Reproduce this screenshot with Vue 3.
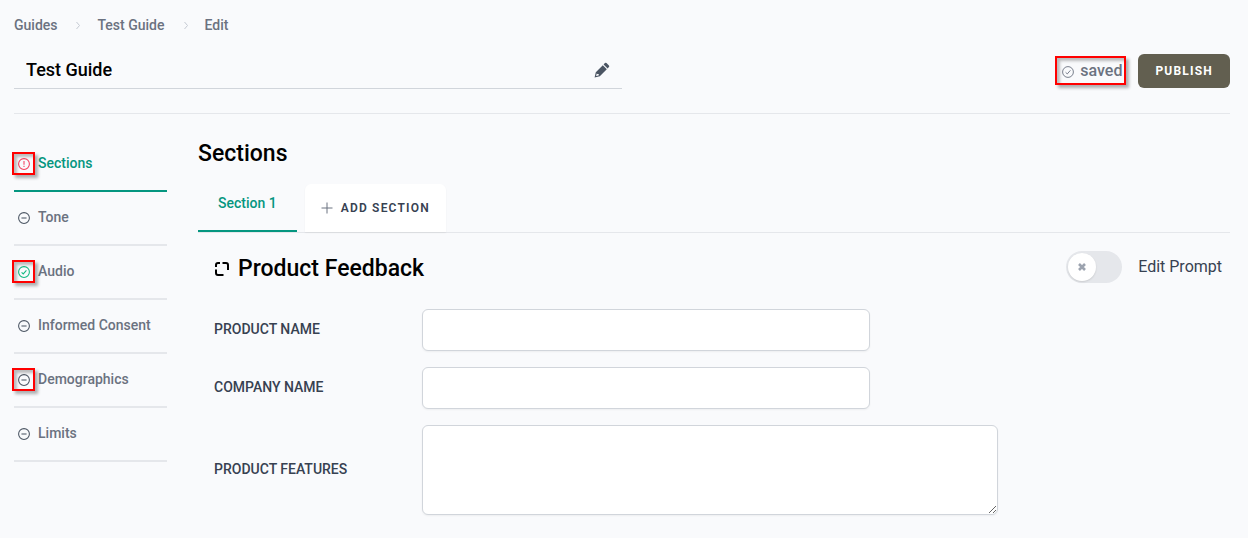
<script setup>
import { ref } from 'vue'

const title = ref('Test Guide')
const crumbs = ['Guides', 'Test Guide', 'Edit']
const steps = [
  { name: 'Sections', status: 'error', active: true, marked: true },
  { name: 'Tone', status: 'empty' },
  { name: 'Audio', status: 'done', marked: true },
  { name: 'Informed Consent', status: 'empty' },
  { name: 'Demographics', status: 'empty', marked: true },
  { name: 'Limits', status: 'empty' },
]
const glyphs = {
  error: 'M8 4v5M8 10.4v1.6',
  empty: 'M4.6 8h6.8',
  done: 'M4.8 8.4l2.2 2.2 4.2-4.8',
}
const editPrompt = ref(false)
</script>

<template>
  <div class="page">
    <nav class="crumbs" aria-label="Breadcrumb">
      <template v-for="(crumb, i) in crumbs" :key="crumb">
        <svg v-if="i" class="chevron" viewBox="0 0 8 8" aria-hidden="true"><path d="M3.5 1L6.5 4.5L3.5 8" /></svg>
        <a href="#">{{ crumb }}</a>
      </template>
    </nav>

    <header class="header">
      <div class="title-field">
        <input v-model="title" class="title-input" type="text" aria-label="Guide title" />
        <svg class="pencil" viewBox="0 0 16 16" aria-hidden="true">
          <path d="M10.9 1.1q.8-.8 1.6 0l2.4 2.4q.8.8 0 1.6l-1.3 1.3-4-4z" />
          <path fill-rule="evenodd" d="M8.8 3.3l4 4-7 7L.6 15.5 1.8 10.3zM2.7 11.5L2.1 14l2.5-.6.2-1.4-1.4-.1z" />
        </svg>
      </div>
      <div class="actions">
        <div class="saved marked">
          <svg class="status" viewBox="0 0 16 16" aria-hidden="true"><circle cx="8" cy="8" r="7.2" /><path :d="glyphs.done" /></svg>
          <span>saved</span>
        </div>
        <button class="publish" type="button">PUBLISH</button>
      </div>
    </header>

    <div class="body">
      <nav class="steps" aria-label="Guide steps">
        <a v-for="step in steps" :key="step.name" href="#" class="step" :class="{ active: step.active }">
          <span class="badge" :class="[step.status, { marked: step.marked }]">
            <svg class="status" viewBox="0 0 16 16" aria-hidden="true"><circle cx="8" cy="8" r="7.2" /><path :d="glyphs[step.status]" /></svg>
          </span>
          <span>{{ step.name }}</span>
        </a>
      </nav>

      <main>
        <h1>Sections</h1>
        <div class="tabs">
          <button class="tab" type="button">Section 1</button>
          <button class="add" type="button">
            <svg class="plus" viewBox="0 0 12 12" aria-hidden="true"><path d="M6 0.5v11M0.5 6h11" /></svg>
            ADD SECTION
          </button>
        </div>

        <section class="panel">
          <div class="panel-head">
            <h2>
              <svg class="frame" viewBox="0 0 16 16" aria-hidden="true">
                <path d="M2 6V4Q2 2 4 2H6M8.5 2H12Q14 2 14 4V9M2 8.5V12Q2 14 4 14H9.5" />
              </svg>
              Product Feedback
            </h2>
            <label class="toggle">
              <span class="switch">
                <input v-model="editPrompt" type="checkbox" role="switch" />
                <span class="knob">
                  <svg viewBox="0 0 12 12" aria-hidden="true"><path d="M3 3l6 6M9 3l-6 6" /></svg>
                </span>
              </span>
              <span>Edit Prompt</span>
            </label>
          </div>

          <form class="fields">
            <label for="product-name">PRODUCT NAME</label>
            <input id="product-name" type="text" />
            <label for="company-name">COMPANY NAME</label>
            <input id="company-name" type="text" />
            <label for="product-features">PRODUCT FEATURES</label>
            <textarea id="product-features"></textarea>
          </form>
        </section>
      </main>
    </div>
  </div>
</template>

<style>
body {
  background: #f9fafc;
}
</style>

<style scoped>
.page,
.page * {
  box-sizing: border-box;
}
.page {
  padding: 15px 18px 22px 14px;
  font: 500 14px/20px Roboto, "Liberation Sans", sans-serif;
  color: #6b7280;
}
a {
  color: inherit;
  text-decoration: none;
}
button,
input,
textarea {
  font: inherit;
  margin: 0;
}
svg {
  display: block;
  flex: none;
}

.crumbs {
  display: flex;
  align-items: center;
  gap: 16px;
}
.chevron {
  width: 8px;
  height: 8px;
  fill: none;
  stroke: #c5cad3;
}

.header {
  display: flex;
  align-items: center;
  justify-content: space-between;
  margin-top: 18px;
  padding-bottom: 24px;
  border-bottom: 1px solid #e5e7eb;
}
.title-field {
  display: flex;
  align-items: center;
  width: 50%;
  height: 36px;
  padding: 0 12px 2px;
  border-bottom: 1px solid #d1d5db;
}
.title-input {
  flex: 1;
  min-width: 0;
  padding: 0;
  border: 0;
  outline: 0;
  background: transparent;
  color: #000;
  font-size: 18px;
  line-height: 28px;
}
.pencil {
  width: 16px;
  height: 16px;
  fill: #4b5563;
}
.actions {
  display: flex;
  align-items: center;
  gap: 16px;
}
.status {
  width: 12px;
  height: 12px;
  fill: none;
  stroke: currentColor;
  stroke-width: 1.4;
}
.saved {
  display: flex;
  align-items: center;
  gap: 6px;
  font-size: 16px;
}
.saved .status {
  margin-top: 2px;
  stroke-width: 1.2;
}
.publish {
  height: 34px;
  padding: 0 17px;
  border: 0;
  border-radius: 6px;
  background: #625f50;
  color: #fff;
  font-size: 12px;
  font-weight: 700;
  letter-spacing: 0.1em;
}

/* Red highlight drawn around an item without affecting its layout */
.marked {
  position: relative;
}
.marked::after {
  content: "";
  position: absolute;
  inset: -6px -5px -5px -6px;
  border: 2px solid #f00;
  box-shadow: 3px 3px 3px rgba(0, 0, 0, 0.3), inset 3px 3px 3px rgba(0, 0, 0, 0.25);
}
.saved.marked::after {
  inset: -5px -4px -4px -7px;
}

.body {
  display: grid;
  grid-template-columns: 153px minmax(0, 1fr);
  gap: 31px;
  margin-top: 24px;
}
.step {
  display: flex;
  align-items: center;
  gap: 8px;
  height: 54px;
  padding: 0 4px 2px;
  border-bottom: 2px solid #e5e7eb;
}
.step.active {
  border-color: #059680;
  color: #059680;
}
.badge {
  margin-top: 2px;
  color: #4b5563;
}
.badge.error {
  color: #f43f5e;
}
.badge.done {
  color: #10b981;
}

h1,
h2 {
  margin: 0;
  color: #000;
  font-size: 23px;
  font-weight: 500;
  line-height: 32px;
}
.tabs {
  display: flex;
  gap: 8px;
  margin-top: 14px;
  border-bottom: 1px solid #e5e7eb;
}
.tab {
  height: 48px;
  padding: 0 20px 8px;
  border: 0;
  border-bottom: 2px solid #059680;
  background: transparent;
  color: #059680;
}
.add {
  display: flex;
  align-items: center;
  gap: 8px;
  height: 48px;
  padding: 0 16px;
  border: 0;
  border-radius: 6px 6px 0 0;
  background: #fff;
  box-shadow: 0 1px 2px rgba(0, 0, 0, 0.06);
  color: #374151;
  font-size: 12px;
  font-weight: 600;
  letter-spacing: 0.1em;
}
.plus {
  width: 12px;
  height: 12px;
  fill: none;
  stroke: #6b7280;
}

.panel {
  padding: 18px 8px 0 16px;
}
.panel-head {
  display: flex;
  align-items: flex-start;
  justify-content: space-between;
}
h2 {
  display: flex;
  align-items: center;
  gap: 8px;
  line-height: 36px;
}
.frame {
  width: 16px;
  height: 16px;
  fill: none;
  stroke: #000;
  stroke-width: 2;
}
.toggle {
  display: flex;
  align-items: center;
  gap: 16px;
  color: #374151;
  font-size: 16px;
  font-weight: 400;
}
.switch {
  position: relative;
  width: 56px;
  height: 32px;
}
.switch input {
  display: block;
  width: 100%;
  height: 100%;
  appearance: none;
  border-radius: 16px;
  background: #e5e7eb;
}
.knob {
  position: absolute;
  top: 2px;
  left: 2px;
  display: grid;
  place-items: center;
  width: 28px;
  height: 28px;
  border-radius: 50%;
  background: #fff;
  box-shadow: 0 1px 2px rgba(0, 0, 0, 0.12);
  pointer-events: none;
}
.knob svg {
  width: 12px;
  height: 12px;
  stroke: #9ca3af;
  stroke-width: 2.6;
}
.switch input:checked {
  background: #059680;
}
.switch input:checked + .knob {
  left: 26px;
}

.fields {
  display: grid;
  grid-template-columns: 192px minmax(0, 1fr);
  align-items: center;
  gap: 16px;
  margin-top: 22px;
  color: #374151;
}
.fields label {
  padding-bottom: 2px;
}
.fields input,
.fields textarea {
  display: block;
  width: 100%;
  padding: 8px 12px;
  border: 1px solid #d1d5db;
  border-radius: 6px;
  background: #fff;
  box-shadow: 0 1px 2px rgba(0, 0, 0, 0.05);
}
.fields input {
  max-width: 448px;
  height: 42px;
}
.fields textarea {
  max-width: 576px;
  height: 90px;
  resize: vertical;
}
</style>
